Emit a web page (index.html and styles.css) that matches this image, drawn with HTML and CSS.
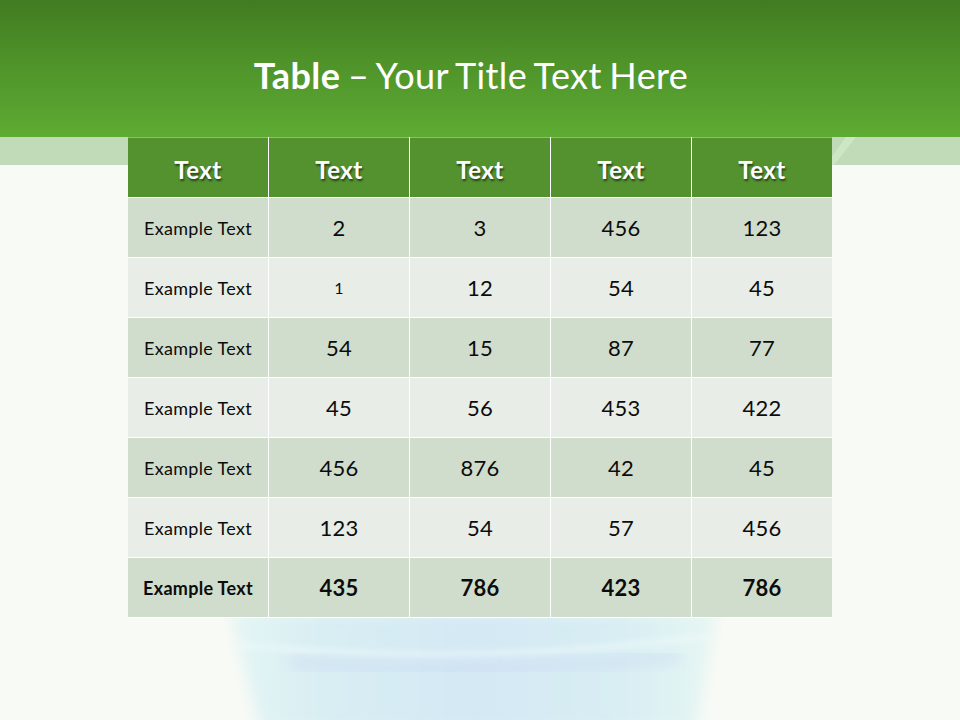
FILE: index.html
```html
<!DOCTYPE html>
<html lang="en">
<head>
<meta charset="utf-8">
<title>Table – Your Title Text Here</title>
<link rel="stylesheet" href="styles.css">
</head>
<body>
<div class="slide">
  <svg class="cup" width="960" height="720" viewBox="0 0 960 720" aria-hidden="true">
    <defs>
      <filter id="soft" x="-20%" y="-20%" width="140%" height="140%">
        <feGaussianBlur stdDeviation="7"/>
      </filter>
      <filter id="soft2" x="-20%" y="-50%" width="140%" height="200%">
        <feGaussianBlur stdDeviation="3"/>
      </filter>
      <linearGradient id="cupfill" x1="0" y1="0" x2="1" y2="0">
        <stop offset="0" stop-color="#e4f5f4"/>
        <stop offset="0.2" stop-color="#d8eef3"/>
        <stop offset="0.5" stop-color="#d4e8f4"/>
        <stop offset="0.8" stop-color="#d8eef3"/>
        <stop offset="1" stop-color="#e6f6f3"/>
      </linearGradient>
    </defs>
    <path d="M230 612 L716 612 L696 730 L260 730 Z" fill="url(#cupfill)" filter="url(#soft)"/>
    <path d="M240 645 Q470 668 708 636" fill="none" stroke="#f2fbfb" stroke-width="3" filter="url(#soft2)"/>
    <path d="M290 662 Q470 678 680 656" fill="none" stroke="#ccdcf4" stroke-width="12" filter="url(#soft)" opacity="0.6"/>
  </svg>
  <svg class="notch" width="30" height="30" viewBox="0 0 30 30" aria-hidden="true">
    <path d="M0 28 L20 0 L30 0 L8 28 Z" fill="#cfe6c6"/>
  </svg>
  <header class="header">
    <h1 class="title"><b>Table</b> – Your Title Text Here</h1>
  </header>
  <table class="grid">
    <thead>
      <tr><th>Text</th><th>Text</th><th>Text</th><th>Text</th><th>Text</th></tr>
    </thead>
    <tbody>
      <tr class="dark"><td class="lbl">Example Text</td><td>2</td><td>3</td><td>456</td><td>123</td></tr>
      <tr class="light"><td class="lbl">Example Text</td><td class="small">1</td><td>12</td><td>54</td><td>45</td></tr>
      <tr class="dark"><td class="lbl">Example Text</td><td>54</td><td>15</td><td>87</td><td>77</td></tr>
      <tr class="light"><td class="lbl">Example Text</td><td>45</td><td>56</td><td>453</td><td>422</td></tr>
      <tr class="dark"><td class="lbl">Example Text</td><td>456</td><td>876</td><td>42</td><td>45</td></tr>
      <tr class="light"><td class="lbl">Example Text</td><td>123</td><td>54</td><td>57</td><td>456</td></tr>
      <tr class="dark total"><td class="lbl">Example Text</td><td>435</td><td>786</td><td>423</td><td>786</td></tr>
    </tbody>
  </table>
</div>
</body>
</html>
```
FILE: styles.css
```css
html, body {
  margin: 0;
  padding: 0;
}
body {
  font-family: "Lato", "Open Sans", sans-serif;
  background: #f8faf5;
}
.slide {
  position: relative;
  width: 960px;
  height: 720px;
  overflow: hidden;
  background:
    linear-gradient(to bottom,
      #427b21 0px,
      #4e9229 60px,
      #5eab33 137px,
      #c1dbb8 137px,
      #c1dbb8 165px,
      #f8faf5 165px,
      #f8faf5 100%);
}
.cup {
  position: absolute;
  left: 0;
  top: 0;
  z-index: 0;
}
.notch {
  position: absolute;
  left: 826px;
  top: 137px;
  z-index: 0;
}
.header {
  position: relative;
  z-index: 1;
  height: 137px;
  display: flex;
  justify-content: center;
  align-items: flex-start;
}
.title {
  margin: 53px 0 0 -18px;
  font-weight: 400;
  font-size: 36px;
  line-height: 44px;
  color: #ffffff;
  letter-spacing: 0.4px;
  word-spacing: -2px;
}
.title b {
  font-weight: 700;
}
.grid {
  position: relative;
  z-index: 1;
  margin: 0 0 0 128px;
  border-collapse: collapse;
  table-layout: fixed;
  width: 704px;
}
.grid th,
.grid td {
  width: 140px;
  border: 1px solid #ffffff;
  text-align: center;
  vertical-align: middle;
  padding: 0;
  color: #0c0c0c;
}
.grid tr > :first-child { border-left: none; }
.grid tr > :last-child { border-right: none; }
.grid thead tr {
  height: 60px;
}
.grid th {
  background: #53922f;
  color: #ffffff;
  font-size: 24px;
  font-weight: 700;
  letter-spacing: 0.5px;
  padding-top: 3px;
  text-shadow: 1px 2px 2px rgba(0, 0, 0, 0.55);
  border-top: 1px solid #8bbf73;
}
.grid tbody tr {
  height: 60px;
}
.grid td {
  font-size: 22px;
  letter-spacing: 0.3px;
}
.grid td.lbl {
  font-size: 18px;
  letter-spacing: 0.3px;
}
.grid td.small {
  font-size: 16px;
}
.dark td {
  background: #d0ddcd;
}
.light td {
  background: #e8ede8;
}
.total td {
  font-weight: 700;
}
```
